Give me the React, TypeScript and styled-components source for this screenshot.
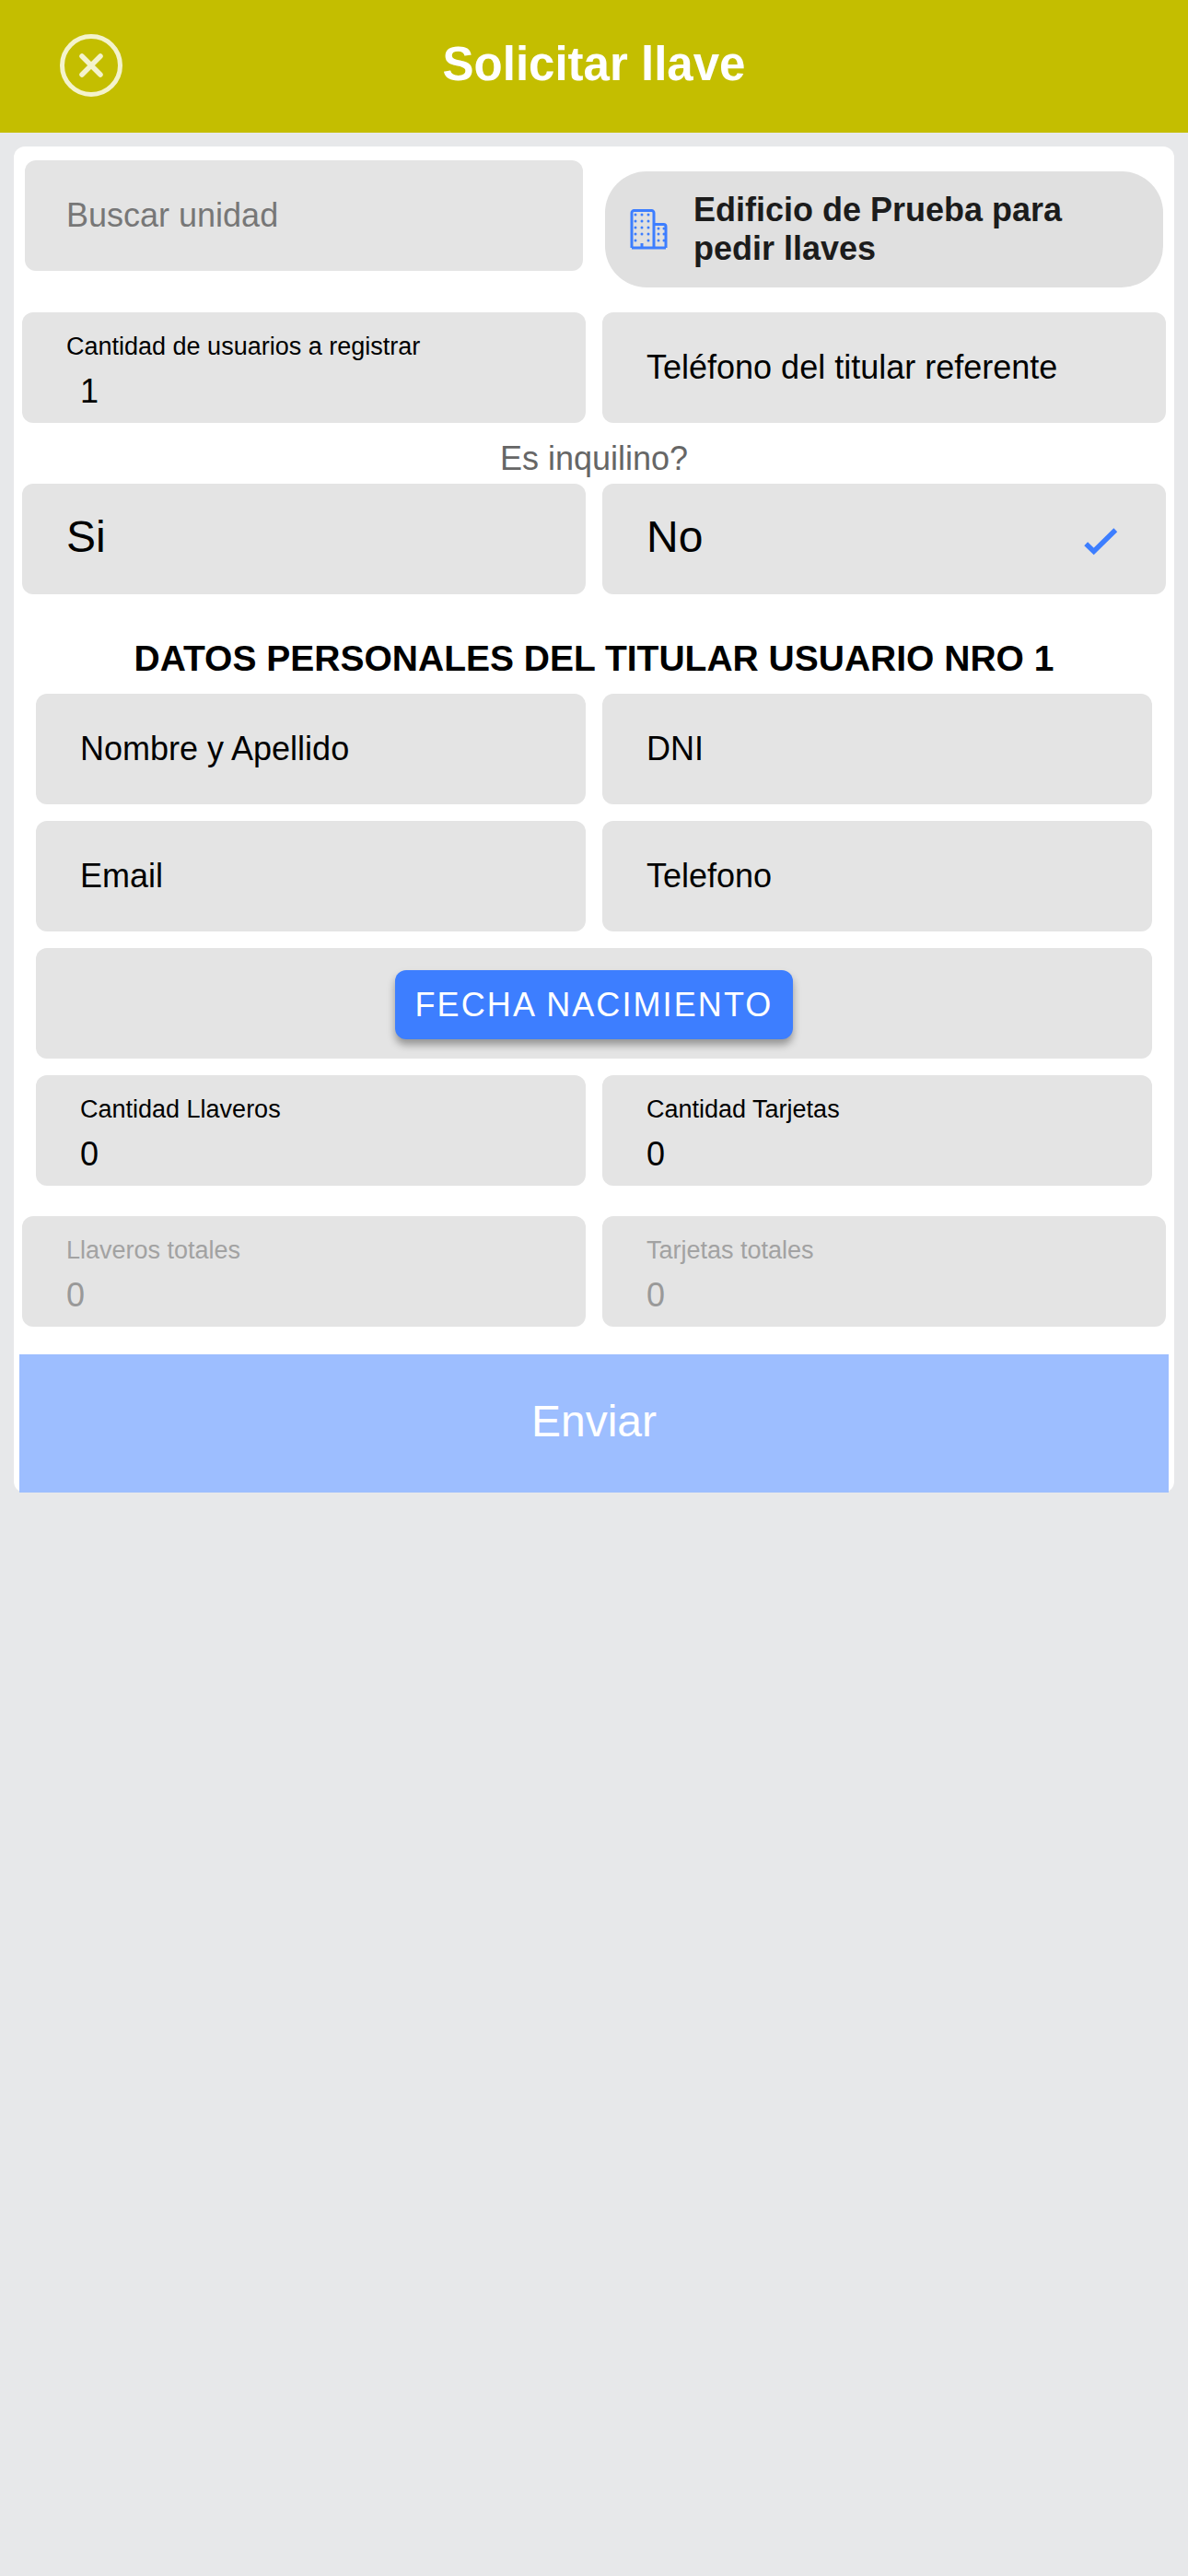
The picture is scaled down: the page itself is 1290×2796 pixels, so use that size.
import { FC } from "react";
import styled, { createGlobalStyle } from "styled-components";

const GlobalStyle = createGlobalStyle`
    html, body {
        margin: 0;
        padding: 0;
        background-color: #e7e8ea;
        font-family: "Liberation Sans", Arial, sans-serif;
    }
`;

const Page = styled.div`
    width: 1290px;
    min-height: 2796px;
    background-color: #e7e8ea;
`;

const Header = styled.header`
    display: grid;
    grid-template-columns: 1fr auto 1fr;
    align-items: center;
    height: 144px;
    padding: 0 65px 6px;
    box-sizing: border-box;
    background-color: #c4be00;
`;

const CloseButton = styled.button`
    display: flex;
    width: 68px;
    height: 68px;
    margin-top: 3px;
    padding: 0;
    border: none;
    background: none;
`;

const Title = styled.h1`
    margin: 0;
    font-size: 51px;
    font-weight: 700;
    color: #ffffff;
`;

const Card = styled.main`
    margin: 15px 15px 0;
    padding-top: 15px;
    border-radius: 12px;
    background-color: #ffffff;
`;

const SearchRow = styled.div`
    display: grid;
    grid-template-columns: 606px 606px;
    gap: 24px;
    align-items: start;
    padding: 0 12px;
    margin-bottom: 27px;
`;

const Row = styled.div<{ $inset?: boolean; $after?: number }>`
    display: grid;
    grid-template-columns: ${(props) => (props.$inset ? "597px 597px" : "612px 612px")};
    gap: 18px;
    padding-left: ${(props) => (props.$inset ? "24px" : "9px")};
    margin-bottom: ${(props) => props.$after ?? 18}px;
`;

const Field = styled.div<{ $big?: boolean }>`
    display: flex;
    align-items: center;
    justify-content: space-between;
    height: 120px;
    padding: 0 48px ${(props) => (props.$big ? 6 : 0)}px;
    box-sizing: border-box;
    border-radius: 12px;
    background-color: #e4e4e4;
    font-size: ${(props) => (props.$big ? 48 : 36)}px;
    color: #000000;
`;

const SearchField = styled(Field)`
    padding: 0 45px;
    color: #777777;
`;

const LabelledField = styled(Field)`
    flex-direction: column;
    align-items: flex-start;
    justify-content: flex-start;
    padding-top: 19px;
`;

const FieldLabel = styled.span<{ $muted?: boolean }>`
    font-size: 27px;
    line-height: 36px;
    color: ${(props) => (props.$muted ? "#a2a2a2" : "#000000")};
`;

const FieldValue = styled.span<{ $muted?: boolean; $indent?: boolean }>`
    margin-top: 13px;
    margin-left: ${(props) => (props.$indent ? "15px" : "0")};
    font-size: 36px;
    line-height: 36px;
    color: ${(props) => (props.$muted ? "#999999" : "#000000")};
`;

const BuildingPill = styled.div`
    display: flex;
    align-items: center;
    gap: 28px;
    height: 126px;
    margin-top: 12px;
    padding: 0 27px;
    box-sizing: border-box;
    border-radius: 45px;
    background-color: #e0e0e0;
`;

const BuildingSvg = styled.svg`
    flex-shrink: 0;
    width: 41px;
    height: 44px;
    fill: none;
`;

const BuildingName = styled.span`
    font-size: 36px;
    font-weight: 700;
    line-height: 42px;
    color: #1c1c1c;
`;

const Question = styled.div`
    height: 66px;
    font-size: 36px;
    line-height: 78px;
    text-align: center;
    color: #666666;
`;

const SectionTitle = styled.h2`
    height: 108px;
    margin: 0;
    font-size: 39px;
    font-weight: 700;
    line-height: 140px;
    text-align: center;
    color: #000000;
`;

const DateField = styled.div`
    display: flex;
    justify-content: center;
    height: 120px;
    width: 1212px;
    margin: 0 0 18px 24px;
    padding-top: 24px;
    box-sizing: border-box;
    border-radius: 12px;
    background-color: #e4e4e4;
`;

const DateButton = styled.button`
    width: 432px;
    height: 75px;
    padding: 0;
    border: none;
    border-radius: 12px;
    background-color: #3d7eff;
    box-shadow: 0 6px 8px rgba(0, 0, 0, 0.35);
    font-family: inherit;
    font-size: 36px;
    letter-spacing: 2.1px;
    color: #ffffff;
`;

const SubmitButton = styled.button`
    display: block;
    width: 1248px;
    height: 150px;
    margin-left: 6px;
    padding: 0 0 6px;
    border: none;
    background-color: #9dbeff;
    font-family: inherit;
    font-size: 48px;
    color: #ffffff;
`;

const CheckSvg = styled.svg`
    flex-shrink: 0;
    width: 48px;
    height: 48px;
    margin-top: 10px;
    fill: none;
`;

const CloseIcon: FC = () => (
    <svg width="68" height="68" viewBox="0 0 68 68" fill="none" stroke="#f4f3cc">
        <circle cx="34" cy="34" r="31.5" strokeWidth="5" />
        <path d="M24 24L44 44M44 24L24 44" strokeWidth="5.5" strokeLinecap="round" />
    </svg>
);

const windowDots: [number, number][] = [];
[6, 13, 20].forEach((x) =>
    [6, 13, 20, 27, 34].forEach((y) => {
        if (!(x === 13 && y === 34)) windowDots.push([x, y]);
    })
);
[31, 37].forEach((x) => [21, 27, 34].forEach((y) => windowDots.push([x, y])));

const BuildingIcon: FC = () => (
    <BuildingSvg viewBox="0 0 41 44">
        <path
            d="M2 42V4a2.5 2.5 0 0 1 2.5-2.5h19A2.5 2.5 0 0 1 26 4v38M26 16.5h10.500a2.500 2.500 0 0 1 2.500 2.500v23M2 42h37M13 42v-5"
            stroke="#3d7eff"
            strokeWidth="3"
            strokeLinejoin="round"
        />
        {windowDots.map(([x, y]) => (
            <circle key={`${x}-${y}`} cx={x} cy={y} r="1.5" fill="#3d7eff" />
        ))}
    </BuildingSvg>
);

const CheckIcon: FC = () => (
    <CheckSvg viewBox="0 0 48 48">
        <polyline points="9.2,27.3 17.7,35.5 41.3,12.3" stroke="#3d7eff" strokeWidth="5.5" />
    </CheckSvg>
);

export default function App() {
    return (
        <Page>
            <GlobalStyle />
            <Header>
                <CloseButton aria-label="Cerrar">
                    <CloseIcon />
                </CloseButton>
                <Title>Solicitar llave</Title>
            </Header>
            <Card>
                <SearchRow>
                    <SearchField>Buscar unidad</SearchField>
                    <BuildingPill>
                        <BuildingIcon />
                        <BuildingName>Edificio de Prueba para pedir llaves</BuildingName>
                    </BuildingPill>
                </SearchRow>
                <Row $after={0}>
                    <LabelledField>
                        <FieldLabel>Cantidad de usuarios a registrar</FieldLabel>
                        <FieldValue $indent>1</FieldValue>
                    </LabelledField>
                    <Field>Teléfono del titular referente</Field>
                </Row>
                <Question>Es inquilino?</Question>
                <Row $after={0}>
                    <Field $big>Si</Field>
                    <Field $big>
                        No
                        <CheckIcon />
                    </Field>
                </Row>
                <SectionTitle>DATOS PERSONALES DEL TITULAR USUARIO NRO 1</SectionTitle>
                <Row $inset>
                    <Field>Nombre y Apellido</Field>
                    <Field>DNI</Field>
                </Row>
                <Row $inset>
                    <Field>Email</Field>
                    <Field>Telefono</Field>
                </Row>
                <DateField>
                    <DateButton>FECHA NACIMIENTO</DateButton>
                </DateField>
                <Row $inset $after={33}>
                    <LabelledField>
                        <FieldLabel>Cantidad Llaveros</FieldLabel>
                        <FieldValue>0</FieldValue>
                    </LabelledField>
                    <LabelledField>
                        <FieldLabel>Cantidad Tarjetas</FieldLabel>
                        <FieldValue>0</FieldValue>
                    </LabelledField>
                </Row>
                <Row $after={30}>
                    <LabelledField>
                        <FieldLabel $muted>Llaveros totales</FieldLabel>
                        <FieldValue $muted>0</FieldValue>
                    </LabelledField>
                    <LabelledField>
                        <FieldLabel $muted>Tarjetas totales</FieldLabel>
                        <FieldValue $muted>0</FieldValue>
                    </LabelledField>
                </Row>
                <SubmitButton>Enviar</SubmitButton>
            </Card>
        </Page>
    );
}
